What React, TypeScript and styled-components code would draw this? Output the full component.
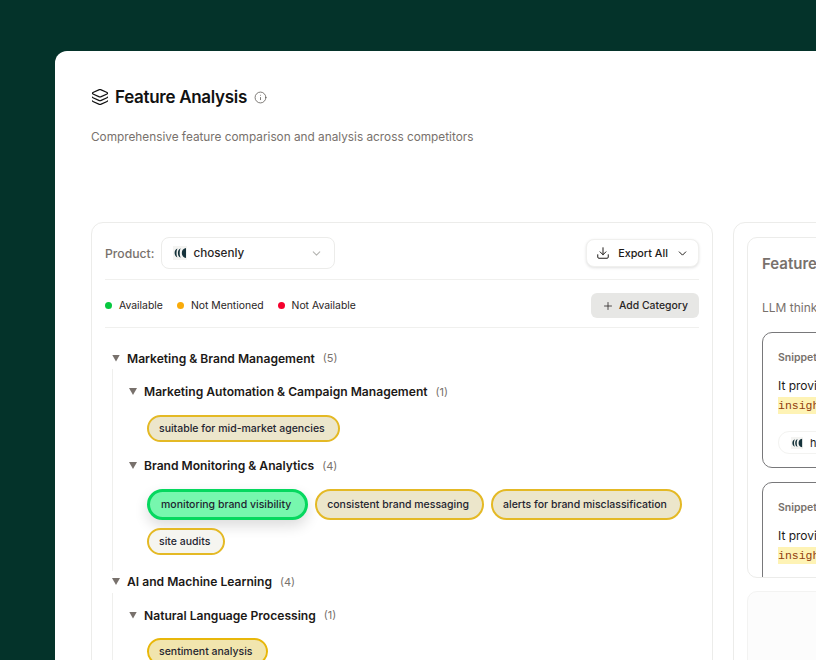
import React from "react";
import styled, { createGlobalStyle } from "styled-components";
import { ChevronDown, Download, Info, Layers, Plus } from "lucide-react";

const GlobalStyle = createGlobalStyle`
  html, body {
    margin: 0;
    padding: 0;
    height: 660px;
    overflow: hidden;
    background: #04332a;
    font-family: Inter, "Liberation Sans", sans-serif;
    color: #1c1917;
  }
`;

const Page = styled.div`
  height: 660px;
  padding: 51px 0 0 55px;
  box-sizing: border-box;
  overflow: hidden;
`;

const Sheet = styled.main`
  width: 1100px;
  height: 900px;
  box-sizing: border-box;
  background: #fff;
  border-radius: 12px 0 0 0;
  padding: 36px;
`;

const TitleRow = styled.div`
  display: flex;
  align-items: center;
  height: 20px;
  color: #111;
`;

const Title = styled.h1`
  margin: 0 7px 0 6px;
  font-size: 17px;
  font-weight: 600;
  letter-spacing: -0.3px;
  line-height: 20px;
`;

const Subtitle = styled.p`
  margin: 20px 0 0;
  font-size: 11.8px;
  line-height: 20px;
  color: #78716c;
`;

const Columns = styled.div`
  display: grid;
  grid-template-columns: 622px 400px;
  gap: 20px;
  margin-top: 75px;
  align-items: start;
`;

const LeftPanel = styled.section`
  box-sizing: border-box;
  height: 700px;
  border: 1px solid #ececea;
  border-radius: 12px;
  padding: 14px 13px 0;
`;

const ToolRow = styled.div`
  display: flex;
  align-items: center;
  justify-content: space-between;
  height: 32px;
  padding-bottom: 10px;
  border-bottom: 1px solid #f0f0ee;
`;

const ProductPick = styled.div`
  display: flex;
  align-items: center;
  gap: 7px;
`;

const ProductLabel = styled.span`
  font-size: 12.2px;
  font-weight: 500;
  color: #78716c;
`;

const Select = styled.div`
  box-sizing: border-box;
  width: 174px;
  height: 32px;
  display: flex;
  align-items: center;
  padding: 0 11px;
  gap: 6px;
  border: 1px solid #ececea;
  border-radius: 8px;
  font-size: 11.7px;
  font-weight: 500;
  color: #292524;
`;

const SelectText = styled.span`
  flex: 1;
`;

const ExportButton = styled.button`
  box-sizing: border-box;
  width: 113px;
  height: 28px;
  display: flex;
  align-items: center;
  justify-content: center;
  gap: 8px;
  padding: 0;
  border: 1px solid #f0f0ee;
  border-radius: 8px;
  background: #fff;
  box-shadow: 0 1px 3px rgba(0, 0, 0, 0.12);
  font: 500 10.8px Inter, sans-serif;
  color: #1c1917;
`;

const LegendRow = styled.div`
  display: flex;
  align-items: center;
  justify-content: space-between;
  height: 43px;
  padding-top: 4px;
  border-bottom: 1px solid #f0f0ee;
`;

const Legend = styled.div`
  display: flex;
  align-items: center;
  gap: 14px;
`;

const LegendItem = styled.span`
  display: flex;
  align-items: center;
  gap: 7px;
  font-size: 10.4px;
  font-weight: 400;
  color: #292524;
`;

const Dot = styled.i<{ $color: string }>`
  width: 7px;
  height: 7px;
  border-radius: 50%;
  background: ${(p) => p.$color};
`;

const AddButton = styled.button`
  box-sizing: border-box;
  width: 108px;
  height: 25px;
  display: flex;
  align-items: center;
  justify-content: center;
  gap: 5px;
  padding: 0;
  border: 0;
  border-radius: 6px;
  background: #e7e7e5;
  font: 500 10.4px Inter, sans-serif;
  color: #292524;
`;

const Tree = styled.div`
  padding: 19px 0 0 7px;
`;

const Heading = styled.div`
  display: flex;
  align-items: center;
  height: 22px;
  font-size: 12.1px;
  font-weight: 600;
  color: #1c1917;
`;

const Caret = styled.span`
  width: 8px;
  height: 7px;
  margin-right: 7px;
  background: #78716c;
  clip-path: polygon(0 0, 100% 0, 50% 100%);
`;

const Count = styled.span`
  margin-left: 8px;
  font-size: 11px;
  font-weight: 400;
  color: #78716c;
`;

const Branch = styled.div`
  padding-left: 16px;
  padding-bottom: 3px;
  border-left: 1px solid #efefed;
`;

const Group = styled.div`
  padding-top: 11.5px;
`;

const Tags = styled.div`
  display: flex;
  flex-wrap: wrap;
  gap: 8px 7px;
  padding: 12px 0 13px 18px;
`;

const tagColors = {
  full: { bg: "#ece6cb", line: "#e4b925" },
  pale: { bg: "#f5f5f0", line: "#e4b925" },
  strong: { bg: "#f1e5ae", line: "#e8b70a" },
};

const Tag = styled.span<{ $kind: keyof typeof tagColors }>`
  box-sizing: border-box;
  min-height: 27px;
  display: inline-flex;
  align-items: center;
  padding: 0 13px 0 10px;
  border-radius: 16px;
  border: 2px solid ${(p) => tagColors[p.$kind].line};
  background: ${(p) => tagColors[p.$kind].bg};
  font-size: 10.5px;
  font-weight: 500;
  color: #1f2430;
  white-space: nowrap;
`;

const ActiveTag = styled.span`
  box-sizing: border-box;
  height: 31px;
  display: inline-flex;
  align-items: center;
  padding: 0 14px 0 11px;
  border-radius: 16px;
  border: 3px solid #06d85f;
  background: #77f7ae;
  box-shadow: 0 6px 14px rgba(0, 0, 0, 0.14);
  font-size: 10.5px;
  font-weight: 500;
  color: #1f2430;
  white-space: nowrap;
`;

const RightColumn = styled.section`
  box-sizing: border-box;
  height: 700px;
  border: 1px solid #ececea;
  border-radius: 12px;
  padding: 14px 13px;
`;

const DetailCard = styled.div`
  box-sizing: border-box;
  height: 341px;
  overflow: hidden;
  border: 1px solid #ececea;
  border-radius: 10px;
  padding: 16px 14px 0;
`;

const DetailTitle = styled.h2`
  margin: 0;
  font-size: 15px;
  font-weight: 600;
  line-height: 20px;
  color: #78716c;
`;

const DetailNote = styled.p`
  margin: 24px 0 14px;
  font-size: 12px;
  line-height: 20px;
  color: #78716c;
`;

const Snippet = styled.article`
  box-sizing: border-box;
  height: 136px;
  margin-bottom: 14px;
  border: 1.5px solid #78787a;
  border-radius: 10px;
  padding: 17px 15px 0;
`;

const SnippetLabel = styled.div`
  font-size: 10.5px;
  font-weight: 600;
  line-height: 16px;
  color: #78716c;
`;

const SnippetText = styled.div`
  margin-top: 10px;
  font-size: 12px;
  line-height: 20px;
  color: #1c1917;
  white-space: nowrap;
`;

const Mark = styled.mark`
  display: table;
  margin-top: 1px;
  background: #fef3b5;
  color: #92400e;
  font-family: "Liberation Mono", "DejaVu Sans Mono", monospace;
  font-size: 11.5px;
  line-height: 17px;
`;

const SourceChip = styled.div`
  display: inline-flex;
  align-items: center;
  gap: 7px;
  height: 21px;
  margin-top: 17px;
  padding: 0 12px;
  border: 1px solid #f3f3f1;
  border-radius: 11px;
  font-size: 11px;
  white-space: nowrap;
`;

const EmptyCard = styled.div`
  height: 200px;
  margin-top: 13px;
  background: #fcfcfc;
  border: 1px solid #f3f3f2;
  border-radius: 10px;
`;

const BrandMark = ({ size = 14 }: { size?: number }) => (
  <svg width={size} height={size} viewBox="0 0 14 14" fill="none">
    <rect width="14" height="14" fill="#f4f4f2" />
    <path d="M13 2C10 2.6 8.8 4.6 8.8 7s1.2 4.4 4.2 5z" fill="#15323a" />
    <path d="M7.6 2.2C5.6 3.2 4.9 5 4.9 7s.7 3.8 2.7 4.8C6.9 10 6.7 8.5 6.7 7s.2-3 .9-4.8z" fill="#15323a" />
    <path d="M4.4 2.6C2.5 3.5 1.6 5.1 1.6 7s.9 3.5 2.8 4.4C3.7 9.9 3.5 8.4 3.5 7s.2-2.9.9-4.4z" fill="#15323a" />
  </svg>
);

const SnippetBlock = ({ source }: { source?: boolean }) => (
  <Snippet>
    <SnippetLabel>Snippet</SnippetLabel>
    <SnippetText>It provides</SnippetText>
    <Mark>insights</Mark>
    {source && (
      <SourceChip>
        <BrandMark size={12} />
        https://chosenly.com
      </SourceChip>
    )}
  </Snippet>
);

export default function App() {
  return (
    <Page>
      <GlobalStyle />
      <Sheet>
        <TitleRow>
          <Layers size={18} strokeWidth={1.6} />
          <Title>Feature Analysis</Title>
          <Info size={13} strokeWidth={1.4} color="#57534e" />
        </TitleRow>
        <Subtitle>Comprehensive feature comparison and analysis across competitors</Subtitle>

        <Columns>
          <LeftPanel>
            <ToolRow>
              <ProductPick>
                <ProductLabel>Product:</ProductLabel>
                <Select>
                  <BrandMark />
                  <SelectText>chosenly</SelectText>
                  <ChevronDown size={13} color="#b5b5b2" />
                </Select>
              </ProductPick>
              <ExportButton>
                <Download size={14} strokeWidth={1.7} />
                Export All
                <ChevronDown size={13} strokeWidth={1.8} />
              </ExportButton>
            </ToolRow>

            <LegendRow>
              <Legend>
                <LegendItem><Dot $color="#06c83f" />Available</LegendItem>
                <LegendItem><Dot $color="#f9ab0a" />Not Mentioned</LegendItem>
                <LegendItem><Dot $color="#f5002d" />Not Available</LegendItem>
              </Legend>
              <AddButton>
                <Plus size={12} strokeWidth={1.6} />
                Add Category
              </AddButton>
            </LegendRow>

            <Tree>
              <Heading>
                <Caret />
                Marketing &amp; Brand Management
                <Count>(5)</Count>
              </Heading>
              <Branch>
                <Group>
                  <Heading>
                    <Caret />
                    Marketing Automation &amp; Campaign Management
                    <Count>(1)</Count>
                  </Heading>
                  <Tags>
                    <Tag $kind="full">suitable for mid-market agencies</Tag>
                  </Tags>
                </Group>
                <Heading>
                  <Caret />
                  Brand Monitoring &amp; Analytics
                  <Count>(4)</Count>
                </Heading>
                <Tags>
                  <ActiveTag>monitoring brand visibility</ActiveTag>
                  <Tag $kind="full">consistent brand messaging</Tag>
                  <Tag $kind="full">alerts for brand misclassification</Tag>
                  <Tag $kind="pale">site audits</Tag>
                </Tags>
              </Branch>
              <Heading>
                <Caret />
                AI and Machine Learning
                <Count>(4)</Count>
              </Heading>
              <Branch>
                <Group>
                  <Heading>
                    <Caret />
                    Natural Language Processing
                    <Count>(1)</Count>
                  </Heading>
                  <Tags>
                    <Tag $kind="strong">sentiment analysis</Tag>
                  </Tags>
                </Group>
              </Branch>
            </Tree>
          </LeftPanel>

          <RightColumn>
            <DetailCard>
              <DetailTitle>Feature Details</DetailTitle>
              <DetailNote>LLM thinks this feature is available</DetailNote>
              <SnippetBlock source />
              <SnippetBlock />
            </DetailCard>
            <EmptyCard />
          </RightColumn>
        </Columns>
      </Sheet>
    </Page>
  );
}
